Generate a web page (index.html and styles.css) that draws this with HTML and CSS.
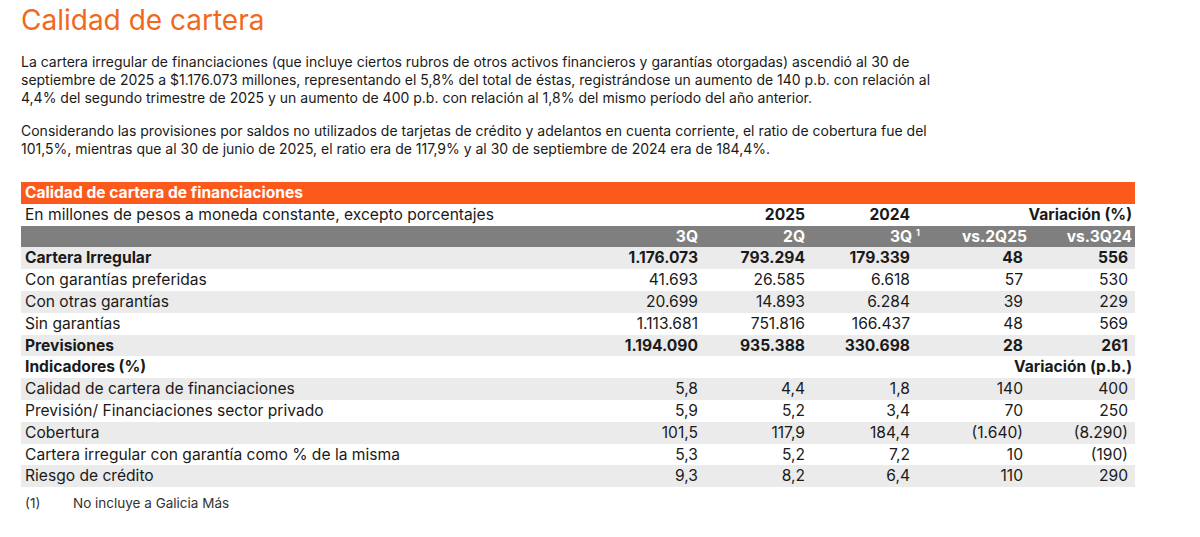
FILE: index.html
```html
<!DOCTYPE html>
<html lang="es">
<head>
    <meta charset="UTF-8">
    <meta name="viewport" content="width=device-width, initial-scale=1.0">
    <title>Calidad de cartera</title>
    <link rel="stylesheet" href="styles.css">
</head>
<body>
    <h1 class="title">Calidad de cartera</h1>

    <p class="text">La cartera irregular de financiaciones (que incluye ciertos rubros de otros activos financieros y garantías otorgadas) ascendió al 30 de septiembre de 2025 a $1.176.073 millones, representando el 5,8% del total de éstas, registrándose un aumento de 140 p.b. con relación al 4,4% del segundo trimestre de 2025 y un aumento de 400 p.b. con relación al 1,8% del mismo período del año anterior.</p>

    <p class="text second">Considerando las provisiones por saldos no utilizados de tarjetas de crédito y adelantos en cuenta corriente, el ratio de cobertura fue del 101,5%, mientras que al 30 de junio de 2025, el ratio era de 117,9% y al 30 de septiembre de 2024 era de 184,4%.</p>

    <table class="quality">
        <colgroup>
            <col class="c-label">
            <col class="c-q1">
            <col class="c-q2">
            <col class="c-q3">
            <col class="c-v1">
            <col class="c-v2">
        </colgroup>
        <tr class="head-orange">
            <td colspan="6">Calidad de cartera de financiaciones</td>
        </tr>
        <tr class="subhead">
            <td>En millones de pesos a moneda constante, excepto porcentajes</td>
            <td></td>
            <td class="b">2025</td>
            <td class="b">2024</td>
            <td class="b" colspan="2">Variación (%)</td>
        </tr>
        <tr class="head-gray">
            <td></td>
            <td>3Q</td>
            <td>2Q</td>
            <td>3Q<span class="note">1</span></td>
            <td>vs.2Q25</td>
            <td>vs.3Q24</td>
        </tr>
        <tr class="shade bold">
            <td>Cartera Irregular</td>
            <td>1.176.073</td><td>793.294</td><td>179.339</td><td class="v">48</td><td class="v">556</td>
        </tr>
        <tr>
            <td>Con garantías preferidas</td>
            <td>41.693</td><td>26.585</td><td>6.618</td><td class="v">57</td><td class="v">530</td>
        </tr>
        <tr class="shade">
            <td>Con otras garantías</td>
            <td>20.699</td><td>14.893</td><td>6.284</td><td class="v">39</td><td class="v">229</td>
        </tr>
        <tr>
            <td>Sin garantías</td>
            <td>1.113.681</td><td>751.816</td><td>166.437</td><td class="v">48</td><td class="v">569</td>
        </tr>
        <tr class="shade bold">
            <td>Previsiones</td>
            <td>1.194.090</td><td>935.388</td><td>330.698</td><td class="v">28</td><td class="v">261</td>
        </tr>
        <tr class="bold">
            <td>Indicadores (%)</td>
            <td></td><td></td><td></td><td colspan="2" class="v">Variación (p.b.)</td>
        </tr>
        <tr class="shade">
            <td>Calidad de cartera de financiaciones</td>
            <td>5,8</td><td>4,4</td><td>1,8</td><td class="v">140</td><td class="v">400</td>
        </tr>
        <tr>
            <td>Previsión/ Financiaciones sector privado</td>
            <td>5,9</td><td>5,2</td><td>3,4</td><td class="v">70</td><td class="v">250</td>
        </tr>
        <tr class="shade">
            <td>Cobertura</td>
            <td>101,5</td><td>117,9</td><td>184,4</td><td class="v">(1.640)</td><td class="v">(8.290)</td>
        </tr>
        <tr>
            <td>Cartera irregular con garantía como % de la misma</td>
            <td>5,3</td><td>5,2</td><td>7,2</td><td class="v">10</td><td class="v">(190)</td>
        </tr>
        <tr class="shade">
            <td>Riesgo de crédito</td>
            <td>9,3</td><td>8,2</td><td>6,4</td><td class="v">110</td><td class="v">290</td>
        </tr>
    </table>

    <div class="footnote">
        <span class="fn-num">(1)</span>
        <span>No incluye a Galicia Más</span>
    </div>
</body>
</html>
```

FILE: styles.css
```css
body {
    margin: 0;
    padding: 0 21px;
    font-family: Inter, "Liberation Sans", Arial, sans-serif;
    color: #1a1a1a;
    background: #ffffff;
}
.title {
    margin: 3px 0 0;
    font-size: 28px;
    line-height: 35px;
    font-weight: 400;
    color: #f0691d;
}
.text {
    margin: 15px 0 0;
    width: 930px;
    font-size: 14px;
    line-height: 18px;
}
.text.second {
    margin-top: 15px;
}
.quality {
    margin-top: 24px;
    width: 1114px;
    border-collapse: collapse;
    table-layout: fixed;
    font-size: 15.6px;
}
.c-label { width: 580px; }
.c-q1 { width: 100px; }
.c-q2 { width: 107px; }
.c-q3 { width: 105px; }
.c-v1 { width: 117px; }
.c-v2 { width: 105px; }
.quality tr {
    height: 21.8px;
}
.quality td {
    padding: 0 3px;
    text-align: right;
    white-space: nowrap;
    line-height: 21.8px;
}
.quality td:first-child {
    text-align: left;
    padding-left: 4px;
}
.quality td.v {
    padding-right: 7px;
}
.quality td.v[colspan] {
    padding-right: 3px;
}
.head-orange td {
    background: #fc5a1d;
    color: #ffffff;
    font-weight: 700;
}
.subhead .b {
    font-weight: 700;
}
.head-gray td {
    background: #7f7f7f;
    color: #ffffff;
    font-weight: 700;
}
.note {
    font-size: 9px;
    line-height: 0;
    vertical-align: 6px;
    margin-left: 4px;
    margin-right: -10px;
}
.shade td {
    background: #ebebeb;
}
.bold td {
    font-weight: 700;
}
.footnote {
    margin-top: 8px;
    padding-left: 4px;
    display: flex;
    font-size: 13.5px;
    color: #333333;
}
.fn-num {
    width: 48px;
}
```
